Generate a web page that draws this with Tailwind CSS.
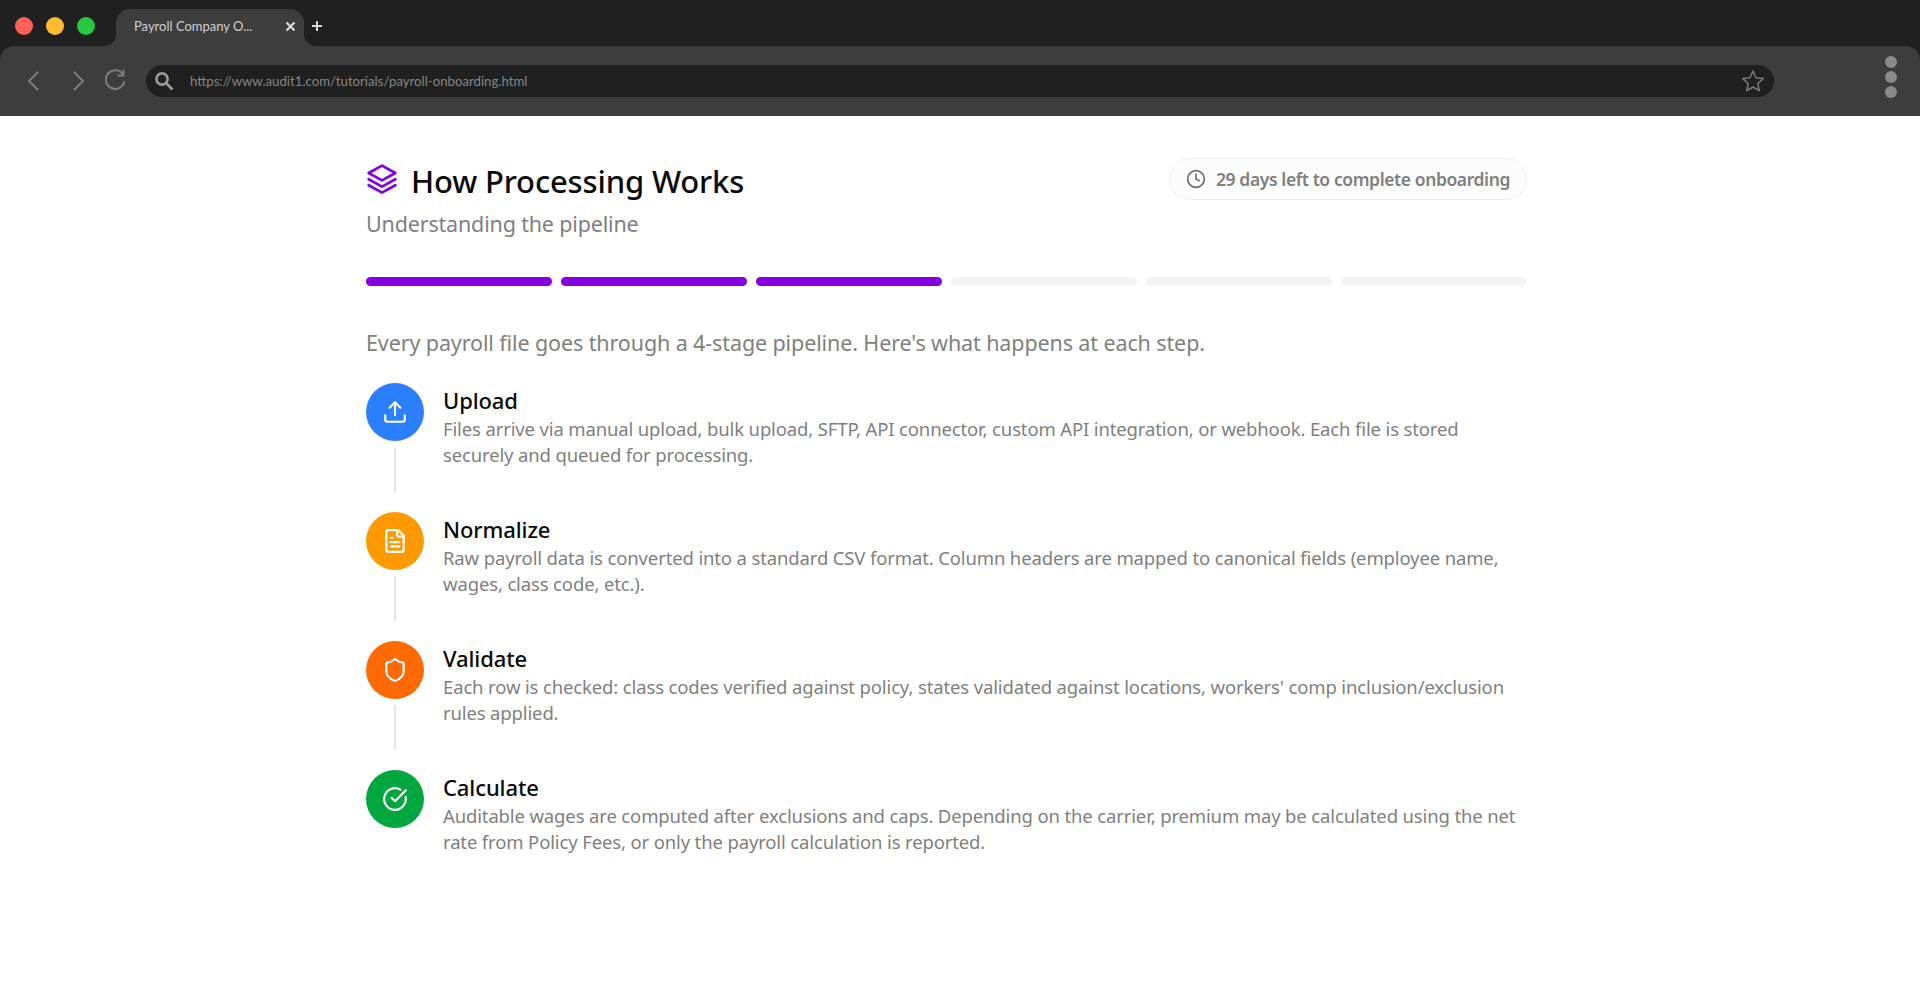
<!DOCTYPE html>
<html lang="en">
<head>
  <meta charset="UTF-8">
  <title>Payroll Company Onboarding</title>
  <script src="https://cdn.jsdelivr.net/npm/@tailwindcss/browser@4"></script>
</head>
<body class="bg-white h-[1000px] overflow-hidden font-['Noto_Sans',sans-serif]">
  <!-- Browser chrome -->
  <div class="bg-[#202020] h-[116px] flex flex-col">
    <div class="h-[46px] flex items-end shrink-0">
      <div class="flex items-center gap-[13px] pl-[15px] w-[116px] h-[46px] pt-[6px]">
        <span class="w-[18px] h-[18px] rounded-full bg-[#ff5f57]"></span>
        <span class="w-[18px] h-[18px] rounded-full bg-[#febc2e]"></span>
        <span class="w-[18px] h-[18px] rounded-full bg-[#28c840]"></span>
      </div>
      <div class="relative w-[188px] h-[37px] bg-[#3d3d3d] rounded-t-[14px] flex items-center pl-[18px] pr-[8px] pb-[2px] justify-between">
        <svg class="absolute -left-[12px] bottom-0 w-[12px] h-[12px]" viewBox="0 0 12 12"><path d="M12 0v12H0A12 12 0 0 0 12 0z" fill="#3d3d3d"/></svg>
        <span class="text-[13px] text-[#cfcfcf] font-['Lato',sans-serif]">Payroll Company O...</span>
        <svg class="w-[11px] h-[11px] -mt-[1px]" viewBox="0 0 11 11" fill="none" stroke="#d8d8d8" stroke-width="2.2"><path d="M1.500 1.500l8 8M9.500 1.500l-8 8"/></svg>
        <svg class="absolute -right-[12px] bottom-0 w-[12px] h-[12px]" viewBox="0 0 12 12"><path d="M0 0v12h12A12 12 0 0 1 0 0z" fill="#3d3d3d"/></svg>
      </div>
      <svg class="ml-[7px] mb-[14px] w-[12px] h-[12px]" viewBox="0 0 12 12" fill="none" stroke="#d8d8d8" stroke-width="2"><path d="M6 1v10M1 6h10"/></svg>
    </div>
    <div class="flex-1 bg-[#3d3d3d] rounded-t-[14px] flex items-center pl-[24px] pr-[23px]">
      <svg class="w-[20px] h-[24px]" viewBox="0 0 20 24" fill="none" stroke="#7d7d7d" stroke-width="2.2"><path d="M14 3L5 12l9 9"/></svg>
      <svg class="ml-[24px] w-[20px] h-[24px]" viewBox="0 0 20 24" fill="none" stroke="#7d7d7d" stroke-width="2.2"><path d="M6 3l9 9-9 9"/></svg>
      <svg class="ml-[14px] w-[26px] h-[26px]" viewBox="0 0 26 26" fill="none" stroke="#7d7d7d" stroke-width="2"><path d="M21 6.500A9.300 9.300 0 1 0 22.400 13"/><path d="M21.500 1.500v6h-6"/></svg>
      <div class="ml-[18px] w-[1628px] h-[32px] bg-[#202020] rounded-full flex items-center pl-[8px] pr-[9px]">
        <svg class="w-[20px] h-[20px]" viewBox="0 0 20 20" fill="none" stroke="#9a9a9a" stroke-width="2.6"><circle cx="8" cy="8" r="5.600"/><path d="M12.500 12.500l6 6"/></svg>
        <span class="ml-[16px] pt-[1px] text-[13.200px] text-[#858585] font-['Lato',sans-serif]">https://www.audit1.com/tutorials/payroll-onboarding.html</span>
        <svg class="ml-auto w-[24px] h-[24px]" viewBox="0 0 24 24" fill="none" stroke="#7a7a7a" stroke-width="1.500" stroke-linejoin="round"><path d="M12 2l3 6.800 7.200.8-5.400 4.900 1.500 7.200L12 18l-6.300 3.700 1.500-7.200L1.800 9.600 9 8.800z"/></svg>
      </div>
      <div class="ml-auto mb-[8px] flex flex-col gap-[3px]">
        <span class="w-[12px] h-[12px] rounded-full bg-[#8a8a8a]"></span>
        <span class="w-[12px] h-[12px] rounded-full bg-[#8a8a8a]"></span>
        <span class="w-[12px] h-[12px] rounded-full bg-[#8a8a8a]"></span>
      </div>
    </div>
  </div>

  <!-- Page -->
  <main class="w-[1161px] ml-[366px]">
    <div class="flex items-start justify-between pt-[44px] h-[161px]">
      <div>
        <div class="flex items-center gap-[13px] h-[42px]">
          <svg class="w-[32px] h-[32px] -mt-[4px]" viewBox="0 0 24 24" fill="none" stroke="#8400e0" stroke-width="2" stroke-linecap="round" stroke-linejoin="round"><path d="M12 2 2 7.500 12 13l10-5.500z"/><path d="M2 12.200 12 17.700l10-5.500"/><path d="M2 16.700 12 22.200l10-5.500"/></svg>
          <h1 class="text-[31px] leading-[42px] font-medium text-[#0a0a0a] tracking-[-0.15px]">How Processing Works</h1>
        </div>
        <p class="text-[21.500px] leading-[30px] mt-[7px] text-[#7f7f7f] tracking-[-0.17px]">Understanding the pipeline</p>
      </div>
      <div class="-mt-[2px] h-[42px] w-[358px] rounded-full border border-[#f0f0f0] bg-[#fcfcfc] flex items-center pl-[16px]">
        <svg class="w-[20px] h-[20px]" viewBox="0 0 24 24" fill="none" stroke="#6f6f6f" stroke-width="2" stroke-linecap="round" stroke-linejoin="round"><circle cx="12" cy="12" r="10"/><path d="M12 6v6l4 2"/></svg>
        <span class="ml-[10px] text-[17.500px] font-semibold text-[#7f7f7f] tracking-[-0.4px]">29 days left to complete onboarding</span>
      </div>
    </div>

    <div class="grid grid-cols-6 gap-[9.600px]">
      <div class="h-[9px] rounded-full bg-[#8400e0]"></div>
      <div class="h-[9px] rounded-full bg-[#8400e0]"></div>
      <div class="h-[9px] rounded-full bg-[#8400e0]"></div>
      <div class="h-[9px] rounded-full bg-[#f4f4f4]"></div>
      <div class="h-[9px] rounded-full bg-[#f4f4f4]"></div>
      <div class="h-[9px] rounded-full bg-[#f4f4f4]"></div>
    </div>

    <p class="mt-[41px] text-[21.500px] leading-[32px] text-[#7f7f7f] tracking-[-0.11px]">Every payroll file goes through a 4-stage pipeline. Here's what happens at each step.</p>

    <div class="mt-[24px]">
      <!-- Upload -->
      <div class="flex gap-[19px] h-[129px]">
        <div class="w-[58px] flex flex-col items-center shrink-0">
          <div class="w-[58px] h-[58px] rounded-full bg-[#2b7fff] flex items-center justify-center">
            <svg class="w-[26px] h-[26px]" viewBox="0 0 24 24" fill="none" stroke="white" stroke-width="2" stroke-linecap="round" stroke-linejoin="round"><path d="M12 3v12"/><path d="M17 8l-5-5-5 5"/><path d="M21 15v4a2 2 0 0 1-2 2H5a2 2 0 0 1-2-2v-4"/></svg>
          </div>
          <div class="w-[2px] h-[45px] mt-[6px] bg-[#e5e5e5]"></div>
        </div>
        <div class="pt-[2px]">
          <h3 class="text-[22px] leading-[30px] font-medium text-[#0a0a0a] tracking-[-0.1px]">Upload</h3>
          <p class="mt-[1px] text-[18.500px] leading-[25.700px] text-[#7f7f7f] tracking-[-0.14px]">Files arrive via manual upload, bulk upload, SFTP, API connector, custom API integration, or webhook. Each file is stored<br>securely and queued for processing.</p>
        </div>
      </div>
      <!-- Normalize -->
      <div class="flex gap-[19px] h-[129px]">
        <div class="w-[58px] flex flex-col items-center shrink-0">
          <div class="w-[58px] h-[58px] rounded-full bg-[#fe9a00] flex items-center justify-center">
            <svg class="w-[26px] h-[26px]" viewBox="0 0 24 24" fill="none" stroke="white" stroke-width="2" stroke-linecap="round" stroke-linejoin="round"><path d="M15 2H6a2 2 0 0 0-2 2v16a2 2 0 0 0 2 2h12a2 2 0 0 0 2-2V7z"/><path d="M14 2v4a2 2 0 0 0 2 2h4"/><path d="M10 9H8"/><path d="M16 13H8"/><path d="M16 17H8"/></svg>
          </div>
          <div class="w-[2px] h-[45px] mt-[6px] bg-[#e5e5e5]"></div>
        </div>
        <div class="pt-[2px]">
          <h3 class="text-[22px] leading-[30px] font-medium text-[#0a0a0a] tracking-[-0.1px]">Normalize</h3>
          <p class="mt-[1px] text-[18.500px] leading-[25.700px] text-[#7f7f7f] tracking-[-0.14px]">Raw payroll data is converted into a standard CSV format. Column headers are mapped to canonical fields (employee name,<br>wages, class code, etc.).</p>
        </div>
      </div>
      <!-- Validate -->
      <div class="flex gap-[19px] h-[129px]">
        <div class="w-[58px] flex flex-col items-center shrink-0">
          <div class="w-[58px] h-[58px] rounded-full bg-[#ff6900] flex items-center justify-center">
            <svg class="w-[26px] h-[26px]" viewBox="0 0 24 24" fill="none" stroke="white" stroke-width="2" stroke-linecap="round" stroke-linejoin="round"><path d="M20 13c0 5-3.500 7.500-7.660 8.950a1 1 0 0 1-.67-.01C7.500 20.500 4 18 4 13V6a1 1 0 0 1 1-1c2 0 4.500-1.200 6.240-2.720a1.170 1.170 0 0 1 1.520 0C14.510 3.810 17 5 19 5a1 1 0 0 1 1 1z"/></svg>
          </div>
          <div class="w-[2px] h-[45px] mt-[6px] bg-[#e5e5e5]"></div>
        </div>
        <div class="pt-[2px]">
          <h3 class="text-[22px] leading-[30px] font-medium text-[#0a0a0a] tracking-[-0.1px]">Validate</h3>
          <p class="mt-[1px] text-[18.500px] leading-[25.700px] text-[#7f7f7f] tracking-[-0.14px]">Each row is checked: class codes verified against policy, states validated against locations, workers' comp inclusion/exclusion<br>rules applied.</p>
        </div>
      </div>
      <!-- Calculate -->
      <div class="flex gap-[19px] h-[129px]">
        <div class="w-[58px] flex flex-col items-center shrink-0">
          <div class="w-[58px] h-[58px] rounded-full bg-[#00a63e] flex items-center justify-center">
            <svg class="w-[26px] h-[26px]" viewBox="0 0 24 24" fill="none" stroke="white" stroke-width="2" stroke-linecap="round" stroke-linejoin="round"><path d="M21.800 10A10 10 0 1 1 17 3.340"/><path d="m9 11 3 3L22 4"/></svg>
          </div>
        </div>
        <div class="pt-[2px]">
          <h3 class="text-[22px] leading-[30px] font-medium text-[#0a0a0a] tracking-[-0.1px]">Calculate</h3>
          <p class="mt-[1px] text-[18.500px] leading-[25.700px] text-[#7f7f7f] tracking-[-0.14px]">Auditable wages are computed after exclusions and caps. Depending on the carrier, premium may be calculated using the net<br>rate from Policy Fees, or only the payroll calculation is reported.</p>
        </div>
      </div>
    </div>
  </main>
</body>
</html>
